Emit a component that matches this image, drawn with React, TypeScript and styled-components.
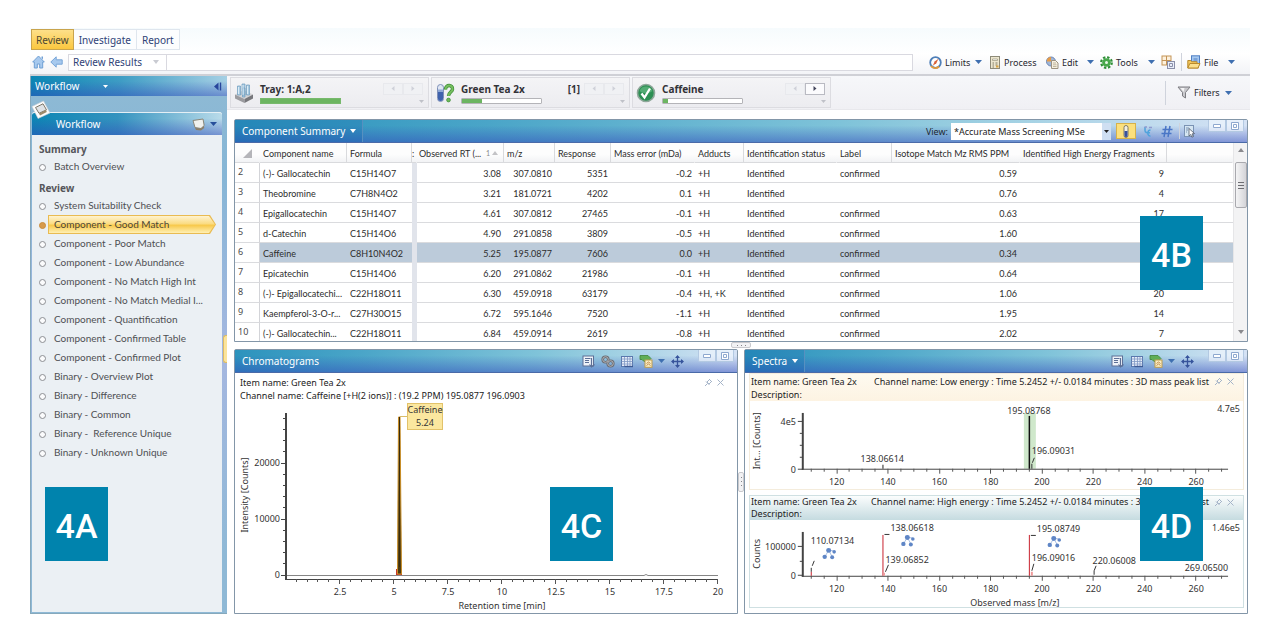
import React from 'react';
import styled, { createGlobalStyle, css } from 'styled-components';

const ui = '"Noto Sans", "Open Sans", sans-serif';
const compact = 'Lato, "Noto Sans", sans-serif';

const GlobalStyle = createGlobalStyle`
  *, *::before, *::after { box-sizing: border-box; }
  body { margin: 0; background: #fff; font-family: ${ui}; color: #2b2b2b; }
  button, select, input { font: inherit; color: inherit; margin: 0; }
  button { border: 0; padding: 0; background: none; cursor: pointer; }
  svg { display: block; flex: none; }
`;

/* ---------- shell ---------- */

const Page = styled.div`
  padding: 28px 30px 24px 30px;
`;

const TopBar = styled.header`
  background: linear-gradient(#f6fbfd 0, #fff 26px, #f1f2f6 48px);
  border-bottom: 2px solid #cfd0d6;
  height: 48px;
`;

const Tabs = styled.nav`
  display: flex;
  height: 23px;
  padding: 1px 0 1px 1px;
`;

const Tab = styled.button<{ $active?: boolean }>`
  font-size: 10px;
  line-height: 18px;
  padding: 0 5px;
  color: #2f4277;
  border: 1px solid #dfe6ee;
  border-left-width: 0;
  background: #fcfdfe;
  ${(p) =>
    p.$active &&
    css`
      padding: 0 4px;
      color: #4d4732;
      border: 1px solid #c9a44d;
      background: linear-gradient(#fde08a, #fbc73f);
    `}
`;

const NavRow = styled.div`
  display: flex;
  align-items: center;
  height: 22px;
`;

const NavIcons = styled.div`
  display: flex;
  gap: 5px;
  padding: 0 5px 0 2px;
`;

const Crumb = styled.button`
  display: flex;
  align-items: center;
  justify-content: space-between;
  width: 99px;
  height: 17px;
  padding: 0 7px 0 4px;
  font-size: 10px;
  color: #2f4277;
  background: #fff;
  border: 1px solid #d9d9e0;
`;

const Address = styled.input`
  flex: 1;
  min-width: 0;
  height: 17px;
  border: 1px solid #d9d9e0;
  border-left: 0;
  background: #fff;
  margin-right: 16px;
`;

const Tools = styled.div`
  display: flex;
  align-items: center;
  height: 22px;
  padding-right: 9px;
`;

const Tool = styled.button<{ $width: number }>`
  display: flex;
  align-items: center;
  gap: 3px;
  width: ${(p) => p.$width}px;
  padding-right: 6px;
  font-size: 9px;
  color: #26262e;
  & > :nth-child(3) { margin-left: auto; }
`;

const Divider = styled.span<{ $height: number; $after?: number }>`
  width: 1px;
  height: ${(p) => p.$height}px;
  margin-right: ${(p) => p.$after ?? 0}px;
  background: #cfd3dc;
`;

const Body = styled.div`
  display: grid;
  grid-template-columns: 197px minmax(0, 1fr);
`;

/* ---------- sidebar ---------- */

const Sidebar = styled.aside`
  position: relative;
  display: flex;
  flex-direction: column;
  background: linear-gradient(#8fbad4 0, #86b6d6 100px, #a5b7e0 280px, #8fb9d6 480px);
  border: 1px solid #86a9bc;
  border-top: 0;
  border-right: 0;
  padding-bottom: 1px;
`;

const blueVertical = 'linear-gradient(rgba(40, 90, 190, 0) 25%, rgba(50, 75, 185, 0.5))';

const SideTitle = styled.h2`
  display: flex;
  align-items: center;
  height: 20px;
  margin: 0;
  padding: 0 5px 0 4px;
  font-size: 10px;
  font-weight: 400;
  color: #fff;
  background: ${blueVertical}, linear-gradient(to right, #0d86b4, #3d9cc4 45%, #a5cfe4);
`;

const TitleButton = styled.button`
  display: flex;
  align-items: center;
  gap: 24px;
  flex: 1;
  color: #fff;
`;

const SidePanel = styled.section`
  position: relative;
  flex: 1;
  display: flex;
  flex-direction: column;
  margin: 16px 5px 0 1px;
  background: #ebf0f4;
  border-radius: 3px 3px 0 0;
`;

const SidePanelTitle = styled.h3`
  display: flex;
  align-items: center;
  height: 23px;
  margin: 0;
  padding: 0 5px 0 24px;
  font-size: 10px;
  font-weight: 400;
  color: #fff;
  border-top: 1px solid #e4eff5;
  border-radius: 3px 3px 0 0;
  background: ${blueVertical}, linear-gradient(to right, #0d86b4, #3493bf 45%, #b9dbea);
`;

const PanelMenu = styled.button`
  display: flex;
  align-items: center;
  gap: 5px;
  margin-left: auto;
`;

const Photo = styled.span`
  position: absolute;
  left: -1px;
  top: -12px;
`;

const StepList = styled.nav`
  display: flex;
  flex-direction: column;
  padding: 6px 6px 0 7px;
`;

const StepHeading = styled.h4`
  margin: 0;
  font-size: 10px;
  line-height: 16px;
  color: #55565a;
  &:not(:first-child) { margin-top: 4px; }
`;

const Step = styled.a<{ $active?: boolean }>`
  display: flex;
  align-items: center;
  height: 19px;
  gap: 2px;
  font-family: ${compact};
  font-size: 10px;
  color: #4e4f53;
  text-decoration: none;
  white-space: nowrap;
  &::before {
    content: '';
    width: 7px;
    height: 7px;
    margin-top: 2px;
    border-radius: 50%;
    border: 1px solid ${(p) => (p.$active ? '#c98c3c' : '#8d8f93')};
    background: ${(p) => (p.$active ? '#d79a4c' : '#fbfcfd')};
  }
`;

const arrowShape = 'polygon(0 0, calc(100% - 6px) 0, 100% 50%, calc(100% - 6px) 100%, 0 100%)';

const StepLabel = styled.span<{ $active?: boolean }>`
  flex: 1;
  line-height: 17px;
  padding: 1px 0 1px 6px;
  white-space: pre;
  ${(p) =>
    p.$active &&
    css`
      color: #4c4637;
      background: #e9bb52;
      clip-path: ${arrowShape};
      padding: 1px;
    `}
`;

const StepFill = styled.span`
  display: block;
  padding-left: 5px;
  background: linear-gradient(#fff3cf, #fbdc83 45%, #f8c94c 55%, #fff0b4);
  clip-path: ${arrowShape};
`;

const CollapseTab = styled.button`
  position: absolute;
  right: 0;
  top: 259px;
  width: 4px;
  height: 28px;
  border: 1px solid #e0bd62;
  border-right: 0;
  border-radius: 3px 0 0 3px;
  background: #fbe49c;
`;

/* ---------- badges over panels ---------- */

const Badge = styled.span<{ $left?: number; $right?: number; $top: number }>`
  position: absolute;
  z-index: 2;
  top: ${(p) => p.$top}px;
  ${(p) => (p.$left !== undefined ? `left: ${p.$left}px;` : `right: ${p.$right}px;`)}
  width: 63px;
  height: 74px;
  background: #0083ad;
  color: #fff;
  font: 500 34px/78px Roboto, sans-serif;
  text-align: center;
`;

/* ---------- item strip ---------- */

const Main = styled.main`
  display: flex;
  flex-direction: column;
  min-width: 0;
`;

const Strip = styled.div`
  display: flex;
  height: 34px;
  background: linear-gradient(#f6f7fa, #f0f0f4);
  border-bottom: 1px solid #e8e8ec;
  padding: 1px 12px 1px 3px;
`;

const StripCard = styled.section`
  display: grid;
  grid-template-columns: 26px minmax(0, 1fr);
  align-items: center;
  width: 199px;
  margin-right: 2px;
  padding-left: 3px;
  border: 1px solid #dcdce1;
  background: linear-gradient(#f4f4f6, #ececf0);
`;

const StripInfo = styled.div`
  display: flex;
  flex-direction: column;
  gap: 2px;
  padding-right: 4px;
`;

const StripHead = styled.div`
  display: flex;
  align-items: center;
  height: 15px;
  font-size: 10px;
  font-weight: 700;
  color: #333338;
`;

const StripCount = styled.span`
  margin-left: auto;
  padding-right: 4px;
`;

const Pager = styled.div`
  display: flex;
  margin-left: auto;
  padding-right: 1px;
  ${StripCount} + & { margin-left: 0; }
`;

const PagerButton = styled.button<{ $on?: boolean }>`
  width: 20px;
  height: 12px;
  display: grid;
  place-items: center;
  border: 1px solid ${(p) => (p.$on ? '#b9bac2' : '#e8e9ed')};
  background: ${(p) => (p.$on ? '#fbfbfd' : '#f0f1f4')};
  color: ${(p) => (p.$on ? '#44465c' : '#cfd1d9')};
`;

const StripFoot = styled.div`
  display: flex;
  align-items: center;
  justify-content: space-between;
`;

const Meter = styled.div`
  width: 81px;
  height: 6px;
  border: 1px solid #b4b4b8;
  border-radius: 1px;
  background: #fff;
`;

const MeterFill = styled.div<{ $share: number }>`
  width: ${(p) => p.$share}%;
  height: 4px;
  background: #6cb561;
  ${(p) => p.$share === 100 && 'outline: 1px solid #77b96c;'}
`;

const Filters = styled.div`
  display: flex;
  align-items: center;
  gap: 11px;
  margin-left: auto;
`;

/* ---------- panels ---------- */

const Workspace = styled.div`
  padding: 9px 2px 0 7px;
`;

const Panel = styled.section`
  position: relative;
  min-width: 0;
  border: 1px solid #8396a8;
  border-radius: 2px 2px 0 0;
  background: #fff;
`;

const PanelHeader = styled.header`
  display: flex;
  align-items: center;
  height: 23px;
  color: #fff;
  border-bottom: 1px solid #4a6aa8;
  background: ${blueVertical},
    linear-gradient(to right, #2c93bd, #4aa5c8 25%, #7fc3d9 60%, #a5d2e4 78%, #d5e2f5);
`;

const PanelTitle = styled.h2<{ $menu?: boolean }>`
  display: flex;
  align-items: center;
  gap: 5px;
  height: 22px;
  margin: 0 auto 0 0;
  padding: 0 6px 0 7px;
  font-size: 10px;
  font-weight: 400;
  ${(p) =>
    p.$menu &&
    css`
      border-right: 1px solid #5790c0;
      background: rgba(10, 90, 165, 0.2);
    `}
`;

const HeaderTools = styled.div<{ $end: number }>`
  display: flex;
  align-items: center;
  gap: 5px;
  height: 22px;
  padding-right: ${(p) => p.$end}px;
`;

const IconButton = styled.button<{ $on?: boolean }>`
  display: grid;
  place-items: center;
  min-width: 14px;
  height: 16px;
  ${(p) =>
    p.$on &&
    css`
      width: 20px;
      border: 1px solid #d6b24b;
      background: #fbe07c;
    `}
`;

const WindowButtons = styled.div`
  display: flex;
  align-self: flex-start;
  padding-right: 3px;
`;

const WindowButton = styled.button`
  width: 18px;
  height: 12px;
  display: grid;
  place-items: center;
  color: #8ea8cf;
  background: rgba(245, 250, 255, 0.6);
  border: 1px solid #b3c9e2;
  border-top: 0;
  border-radius: 0 0 2px 2px;
`;

const ViewPicker = styled.label`
  display: flex;
  align-items: center;
  gap: 3px;
  font-size: 9px;
  color: #1f2733;
`;

const SelectBox = styled.span`
  position: relative;
  display: flex;
  & > svg { position: absolute; right: 2px; top: 7px; pointer-events: none; }
`;

const Select = styled.select`
  appearance: none;
  width: 160px;
  height: 17px;
  padding: 0 10px 0 3px;
  border: 0;
  border-right: 9px solid #cfdff2;
  border-radius: 0;
  background: #fff;
  color: #222;
`;

/* ---------- table ---------- */

const TableArea = styled.div`
  display: grid;
  grid-template-columns: minmax(0, 1fr) 14px;
  height: 198px;
  overflow: hidden;
`;

const Table = styled.table`
  width: 100%;
  table-layout: fixed;
  border-collapse: separate;
  border-spacing: 0;
  font-family: ${compact};
  font-size: 9px;
  line-height: 11px;
`;

const Th = styled.th<{ $line?: boolean; $inset?: number }>`
  height: 20px;
  padding: 1px 0 0 ${(p) => p.$inset ?? 3}px;
  text-align: left;
  font-weight: 400;
  color: #2c2c2c;
  white-space: nowrap;
  background: linear-gradient(#fdfdfd 60%, #f2f3f5);
  border-bottom: 1px solid #d9dadd;
  border-right: 1px solid ${(p) => (p.$line ? '#d9dadd' : 'transparent')};
`;

const Sorted = styled.span`
  display: flex;
  align-items: center;
  justify-content: space-between;
  padding-right: 5px;
`;

const SortMark = styled.span`
  display: flex;
  align-items: center;
  gap: 2px;
  font-size: 7px;
  color: #8a8a8a;
`;

const Tr = styled.tr<{ $selected?: boolean }>`
  background: ${(p) => (p.$selected ? '#bccbda' : '#fff')};
`;

const Td = styled.td<{ $right?: boolean; $inset?: number; $gutter?: boolean }>`
  height: 20px;
  padding: 2px ${(p) => (p.$right ? 3 : 0)}px 0 ${(p) => p.$inset ?? 3}px;
  text-align: ${(p) => (p.$right ? 'right' : 'left')};
  white-space: nowrap;
  color: #2c2c2c;
  border-bottom: 1px solid #dadbde;
  ${(p) => p.$gutter && 'background: #e1e4eb; border-bottom-color: #e1e4eb;'}
`;

const RowHead = styled.th`
  height: 20px;
  padding: 0 0 2px 3px;
  text-align: left;
  font: 400 9px/12px ${ui};
  color: #4a4a4a;
  background: #fff;
  border-right: 1px solid #d3d4d8;
  border-bottom: 1px solid #dadbde;
`;

const ScrollTrack = styled.div`
  display: flex;
  flex-direction: column;
  align-items: center;
  background: #f3f3f4;
  border-left: 1px solid #e6e6e8;
  padding: 5px 0 9px;
  color: #8a8a8e;
`;

const ScrollThumb = styled.div`
  display: grid;
  place-items: center;
  width: 12px;
  height: 46px;
  margin: 10px 0 auto;
  border: 1px solid #a9a9ae;
  border-radius: 2px;
  background: linear-gradient(to right, #f4f4f5, #d4d4d8);
`;

/* ---------- splitters ---------- */

const RowSplitter = styled.div`
  display: flex;
  justify-content: center;
  height: 7px;
`;

const Split = styled.div`
  display: grid;
  grid-template-columns: minmax(0, 1fr) 6px minmax(0, 1fr);
`;

const ColumnSplitter = styled.div`
  align-self: center;
`;

const Grip = styled.div<{ $vertical?: boolean }>`
  display: grid;
  place-items: center;
  width: ${(p) => (p.$vertical ? 6 : 20)}px;
  height: ${(p) => (p.$vertical ? 20 : 6)}px;
  border: 1px solid #c9c9cd;
  border-radius: 2px;
  background: #f2f2f4;
`;

/* ---------- charts ---------- */

const ChartInfo = styled.div<{ $tone?: 'cream' | 'blue' | 'plain' }>`
  display: flex;
  align-items: flex-start;
  font-size: 9px;
  line-height: 13px;
  white-space: nowrap;
  color: #222;
  padding: 3px 12px 0 5px;
  ${(p) =>
    p.$tone === 'cream' &&
    css`
      padding: 1px 8px 0 1px;
      background: linear-gradient(#fefaf0, #fdf3e2);
    `}
  ${(p) =>
    p.$tone === 'blue' &&
    css`
      padding: 0 8px 0 1px;
      line-height: 12px;
      background: linear-gradient(#fbfdfd, #c5dbe0);
    `}
`;

const InfoLines = styled.div`
  flex: 1;
  min-width: 0;
`;

const InfoLine = styled.div`
  display: flex;
  justify-content: space-between;
  padding-right: 5px;
`;

const InfoActions = styled.div`
  display: flex;
  gap: 3px;
  height: 13px;
  align-items: center;
  color: #a5b4c8;
`;

const Chart = styled.svg`
  width: 100%;
  height: auto;
  font-family: ${ui};
  font-size: 9px;
  fill: #333;
`;

const SpectraBody = styled.div`
  display: flex;
  flex-direction: column;
  gap: 5px;
  padding: 0 3px 4px 4px;
`;

const Spectrum = styled.article<{ $blue?: boolean }>`
  border: 1px solid ${(p) => (p.$blue ? '#cfe0e2' : '#f4ecdc')};
`;

/* ---------- drawings ---------- */

const Caret = ({ color = '#3f6fb0', w = 7, h = 4 }: { color?: string; w?: number; h?: number }) => (
  <svg width={w} height={h} viewBox="0 0 8 4" preserveAspectRatio="none"><path d="M0 0h8L4 4z" fill={color} /></svg>
);
const Side = ({ left }: { left?: boolean }) => (
  <svg width="4" height="5" viewBox="0 0 4 5"><path d={left ? 'M3.5 0v5L.5 2.5z' : 'M.5 0v5l3-2.500z'} fill="currentColor" /></svg>
);
const HomeIcon = () => (
  <svg width="13" height="14" viewBox="0 0 13 14">
    <path d="M6.500 1 .7 7h1.600v6h3V9h2.400v4h3V7h1.600z" fill="#a7c9ee" stroke="#6f9fd4" />
    <path d="M9.500 1.500h1.500v3l-1.500-1.500z" fill="#6f9fd4" />
  </svg>
);
const BackIcon = () => (
  <svg width="13" height="12" viewBox="0 0 13 12">
    <path d="M6.200.8v3h6v4.400h-6v3L.8 6z" fill="#a7c9ee" stroke="#78a6d8" />
  </svg>
);
const GaugeIcon = () => (
  <svg width="13" height="13" viewBox="0 0 13 13">
    <circle cx="6.500" cy="6.500" r="5.300" fill="#fff" stroke="#4f7fb8" strokeWidth="1.800" />
    <path d="M2 10A5.300 5.300 0 0 0 10 10.500" fill="none" stroke="#e39a3c" strokeWidth="1.800" />
    <path d="M9.500 2.800 7.300 7.200 3.800 9.800 5.600 5.600z" fill="#d9623a" />
  </svg>
);
const ProcessIcon = () => (
  <svg width="13" height="13" viewBox="0 0 13 13">
    <rect x="2.500" y=".5" width="9" height="12" fill="#ece6cf" stroke="#8d8a78" />
    <path d="M4.500 3h5v1.500h-5z" fill="#fff" stroke="#9a9478" strokeWidth=".7" />
    <path d="M4.500 7h1.500M7.500 7H9.500M4.500 9h1.500M7.500 9H9.500M4.500 11h1.500" stroke="#7f7a62" />
    <path d="M8 9.500h2.500v2H8z" fill="#d9a544" />
  </svg>
);
const EditIcon = () => (
  <svg width="13" height="13" viewBox="0 0 13 13">
    <circle cx="5" cy="5.500" r="4.500" fill="#9fb6d8" stroke="#6d86b2" />
    <path d="M5 1v4.500H.8A4.300 4.300 0 0 1 5 1z" fill="#e79b46" />
    <path d="M5.500 4.500h4l2.500 2.500v5.500H5.500z" fill="#f6efe0" stroke="#9c9280" />
    <path d="M7 7h3M7 8.800h3.500M7 10.500h3.500" stroke="#b4a98f" strokeWidth=".8" />
  </svg>
);
const GearIcon = () => (
  <svg width="13" height="13" viewBox="0 0 13 13">
    <circle cx="6.500" cy="6.500" r="5.300" fill="none" stroke="#2f8f37" strokeWidth="2.200" strokeDasharray="2.400 1.760" />
    <circle cx="6.500" cy="6.500" r="4.300" fill="#47a84b" />
    <circle cx="6.500" cy="6.500" r="1.500" fill="#e9f6e8" />
  </svg>
);
const LayoutIcon = () => (
  <svg width="14" height="14" viewBox="0 0 14 14">
    <rect x="1" y="1" width="9" height="9" fill="#fdf1dd" stroke="#c39355" />
    <path d="M1 5.500h9M5.500 1v9" stroke="#c39355" />
    <rect x="6.500" y="6.500" width="7" height="7" fill="#e9eefa" stroke="#8b8fa8" />
    <path d="M8.500 8.500h3v3h-3z" fill="none" stroke="#8b8fa8" />
  </svg>
);
const FolderIcon = () => (
  <svg width="14" height="14" viewBox="0 0 14 14">
    <rect x="4.500" y=".8" width="8" height="9" fill="#a5c8f0" stroke="#4f7fc4" />
    <path d="M6.500 4h4M6.500 6h4" stroke="#4f7fc4" />
    <path d="M.8 5.500h3l1 1.200h5L11.500 13H.8z" fill="#f3c75c" stroke="#b98a2c" />
    <path d="m.8 13 2-4.500H13L11 13z" fill="#fbdf8c" stroke="#b98a2c" />
  </svg>
);
const FunnelIcon = () => (
  <svg width="14" height="13" viewBox="0 0 14 13">
    <path d="M1 1h12L8.500 6.500V12L5.500 10V6.500z" fill="#c9c9cd" stroke="#7d7d82" />
    <path d="M3.500 2h4L6.500 6z" fill="#f5f5f6" />
  </svg>
);
const TrayIcon = () => (
  <svg width="20" height="20" viewBox="0 0 20 20">
    <path d="M1 11.500 10 7l9 4.500-8.500 4.500z" fill="#d4d4d6" />
    <path d="m1 11.500 9.500 4.500v4L1 15.500z" fill="#9b9b9f" /><path d="M19 11.500 10.500 16v4L19 15.500z" fill="#77777b" />
    <path d="M3.500 3h3v9h-3zM8 1h3v11H8zM12.500 2h3v10h-3zM8.500 5h2.500v9H8.500z" fill="#a9cbe2" stroke="#6e9cbd" strokeWidth=".7" />
    <path d="M4.500 4v7M9 2v10M13.500 3v8" stroke="#e8f4fb" strokeWidth=".8" />
  </svg>
);
const VialIcon = () => (
  <svg width="20" height="20" viewBox="0 0 20 20">
    <rect x="2.500" y="1.500" width="6" height="17" rx="3" fill="#dfe6f3" stroke="#7f90b8" />
    <path d="M3 9h5v6.500a2.500 2.500 0 0 1-5 0z" fill="#3f62ad" /><path d="M3 6.500h5V9H3z" fill="#8ea8d6" />
    <path d="M10.500 6.500C10.500 1 18 1.500 17.500 6.300c-.3 2.700-4 3-4 6.700" fill="none" stroke="#3c8d36" strokeWidth="3.400" />
    <path d="M10.500 6.500C10.500 1 18 1.500 17.500 6.300c-.3 2.700-4 3-4 6.700" fill="none" stroke="#76be5f" strokeWidth="2" />
    <circle cx="13.500" cy="17" r="1.900" fill="#6fba59" stroke="#3c8d36" strokeWidth=".7" />
  </svg>
);
const CheckIcon = () => (
  <svg width="20" height="20" viewBox="0 0 20 20">
    <circle cx="10" cy="10" r="8.500" fill="#2d8f53" stroke="#8fa79a" strokeWidth="1.600" />
    <path d="M3.500 8a7 7 0 0 1 13 0c-4 3-9 3-13 0z" fill="#6cc08a" opacity=".6" />
    <path d="m5.500 10.500 3 4 5.500-9" fill="none" stroke="#fff" strokeWidth="2.300" />
  </svg>
);
const ScreenIcon = () => (
  <svg width="13" height="13" viewBox="0 0 13 13">
    <path d="M1 2.500 11 1l1.200 6.500L9 10.500 3 9.500z" fill="#f1f1ee" stroke="#8a8678" />
    <path d="m3 10 6 .5 3-2.500.2 2-3.200 2.500-5-.5z" fill="#8d7f68" />
  </svg>
);
const PhotoIcon = () => (
  <svg width="20" height="20" viewBox="0 0 20 20">
    <path d="M1 6.500 12.500 1l6.500 12L7 18.500z" fill="#fdfdfd" stroke="#c9cfd4" strokeWidth=".6" />
    <path d="m4.500 7.500 7.500-3.700 3.500 6-7.500 3.500z" fill="#dfe3e6" stroke="#7e7768" />
    <path d="m8 13.500 7-3.500.8 2L9 15.500z" fill="#9c8a6a" />
  </svg>
);
const PinSideIcon = () => (
  <svg width="9" height="9" viewBox="0 0 9 9"><path d="M5.500.5v8L1 4.500z" fill="#28469c" /><path d="M7.500.5v8" stroke="#28469c" strokeWidth="1.400" /></svg>
);
const VialSmallIcon = () => (
  <svg width="6" height="13" viewBox="0 0 6 13"><rect x="1" y=".5" width="4" height="12" rx="2" fill="#f3f0e0" stroke="#7d7a6a" /><path d="M1.500 6h3v4.500a1.500 1.500 0 0 1-3 0z" fill="#37519c" /></svg>
);
const FlowIcon = () => (
  <svg width="13" height="13" viewBox="0 0 13 13" fill="none" stroke="#4fa3dc" strokeWidth="1.500"><path d="M3 2v3.500c0 2 2 2.500 5 2.200M8.500 5C5 5 5 11.500 8.500 11" /><path d="M2.500 2h2.500M7 2.500h3" stroke="#8f9bd0" /></svg>
);
const HashIcon = () => (
  <svg width="12" height="13" viewBox="0 0 12 13" stroke="#4a76c6" strokeWidth="1.500"><path d="M5 1 3 12M9 1 7 12M1.500 4.500H11.500M.5 8.500H10.500" /></svg>
);
const PointerIcon = () => (
  <svg width="13" height="13" viewBox="0 0 13 13"><rect x="1.500" y=".5" width="9" height="11" fill="#d5e6f2" stroke="#7a93b4" /><path d="M3 3h3M3 5h2M3 7h1" stroke="#7a93b4" /><path d="m6 3.500 5.500 5-2.500.4 1.200 2.600-1.300.7L7.700 9.500 6 11z" fill="#fff" stroke="#4c5568" strokeWidth=".8" /></svg>
);
const NotesIcon = () => (
  <svg width="14" height="13" viewBox="0 0 14 13"><rect x="1" y="1" width="10.500" height="10" fill="#eef2f8" stroke="#5d6f96" /><path d="M3 3.500h5.500M3 5.500h4M3 7.500h4" stroke="#5d6f96" /><path d="M9.500 3v8M7.500 9.500l2 2.500 3-2.500" fill="none" stroke="#5d6f96" strokeWidth="1.200" /></svg>
);
const LinkIcon = () => (
  <svg width="14" height="13" viewBox="0 0 14 13" fill="none"><circle cx="4.500" cy="4.500" r="2.800" stroke="#67696f" strokeWidth="2.600" /><circle cx="9.500" cy="8.500" r="2.800" stroke="#67696f" strokeWidth="2.600" /><circle cx="4.500" cy="4.500" r="2.800" stroke="#b4b6ba" /><circle cx="9.500" cy="8.500" r="2.800" stroke="#b4b6ba" /></svg>
);
const GridIcon = () => (
  <svg width="14" height="13" viewBox="0 0 14 13"><rect x="1.500" y="1.500" width="11" height="10" fill="#e6edf8" stroke="#5b78ad" /><path d="M1.500 4h11M1.500 6.500h11M1.500 9h11M4.500 2v9M7.500 2v9M10 2v9" stroke="#7f98c4" strokeWidth=".8" /><path d="M4.500 11.500h8.500" stroke="#3d5a94" strokeWidth="1.400" /></svg>
);
const ExportIcon = () => (
  <svg width="14" height="14" viewBox="0 0 14 14"><path d="M1 1.500h8l3 3-3 3H5l-2-2H1z" fill="#5fae54" stroke="#3d8438" strokeWidth=".8" /><rect x="6" y="6" width="7" height="7.300" fill="#fbeec2" stroke="#bf9c4e" /><path d="m7.500 9.500 2-1.500 2 1.500m-4 2 2-1.500 2 1.500" fill="none" stroke="#bf8a4e" /></svg>
);
const MoveIcon = () => (
  <svg width="13" height="13" viewBox="0 0 13 13"><path d="M6.500 1v11M1 6.500h11" stroke="#37549c" strokeWidth="1.300" /><path d="M6.500 0 9 3H4zM6.500 13 4 10h5zM0 6.500 3 4v5zM13 6.500 10 9V4z" fill="#37549c" /></svg>
);
const MinimizeIcon = () => (
  <svg width="8" height="4" viewBox="0 0 8 4"><path d="M.5.500h7v3h-7z" fill="#fff" stroke="currentColor" /></svg>
);
const MaximizeIcon = () => (
  <svg width="8" height="8" viewBox="0 0 8 8"><path d="M.5.500h7v7h-7zM2.500 2.500h3v3h-3z" fill="#fff" stroke="currentColor" /></svg>
);
const PinIcon = () => (
  <svg width="9" height="9" viewBox="0 0 9 9" fill="none" stroke="currentColor"><path d="M5 1l3 3M5.500 1.500 3 4l2 2 2.500-2.500M2 3.500 5.500 7M3.500 5.500 1 8" /></svg>
);
const CloseIcon = () => (
  <svg width="9" height="9" viewBox="0 0 9 9" stroke="currentColor"><path d="m1.500 1.500 6 6m0-6-6 6" /></svg>
);
const Dots = ({ vertical }: { vertical?: boolean }) => (
  <svg width={vertical ? 1 : 9} height={vertical ? 9 : 1} viewBox={vertical ? '0 0 1 9' : '0 0 9 1'}>
    <path d={vertical ? 'M.5 0v9' : 'M0 .5h9'} stroke="#85858a" strokeDasharray="1 3" />
  </svg>
);
const Molecule = ({ x, y }: { x: number; y: number }) => (
  <g transform={`translate(${x} ${y})`} fill="#5f86c6">
    <path d="M2 9 6 2.500 9.500 9M6 2.500 11 3" fill="none" stroke="#a9bfe2" />
    <circle cx="2" cy="9" r="2.200" /><circle cx="6" cy="2.500" r="2.500" /><circle cx="9.500" cy="9.500" r="2" /><circle cx="11.500" cy="4" r="1.800" />
  </g>
);

/* ---------- data ---------- */

const reviewSteps = [
  'System Suitability Check', 'Component - Good Match', 'Component - Poor Match', 'Component - Low Abundance',
  'Component - No Match High Int', 'Component - No Match Medial I...', 'Component - Quantification',
  'Component - Confirmed Table', 'Component - Confirmed Plot', 'Binary - Overview Plot', 'Binary - Difference',
  'Binary - Common', 'Binary -  Reference Unique', 'Binary - Unknown Unique',
];

const rows = [
  ['2', '(-)- Gallocatechin', 'C15H14O7', '3.08', '307.0810', '5351', '-0.2', '+H', 'confirmed', '0.59', '9'],
  ['3', 'Theobromine', 'C7H8N4O2', '3.21', '181.0721', '4202', '0.1', '+H', '', '0.76', '4'],
  ['4', 'Epigallocatechin', 'C15H14O7', '4.61', '307.0812', '27465', '-0.1', '+H', 'confirmed', '0.63', '17'],
  ['5', 'd-Catechin', 'C15H14O6', '4.90', '291.0858', '3809', '-0.5', '+H', 'confirmed', '1.60', ''],
  ['6', 'Caffeine', 'C8H10N4O2', '5.25', '195.0877', '7606', '0.0', '+H', 'confirmed', '0.34', ''],
  ['7', 'Epicatechin', 'C15H14O6', '6.20', '291.0862', '21986', '-0.1', '+H', 'confirmed', '0.64', ''],
  ['8', '(-)- Epigallocatechi...', 'C22H18O11', '6.30', '459.0918', '63179', '-0.4', '+H, +K', 'confirmed', '1.06', '20'],
  ['9', 'Kaempferol-3-O-r...', 'C27H30O15', '6.72', '595.1646', '7520', '-1.1', '+H', 'confirmed', '1.95', '14'],
  ['10', '(-)- Gallocatechin...', 'C22H18O11', '6.84', '459.0914', '2619', '-0.8', '+H', 'confirmed', '2.02', '7'],
];

const columnWidths = [25, 87, 65, 5, 87, 51, 56, 84, 49, 93, 55, 128, 147];

/* ---------- parts ---------- */

function StripItem({ icon, name, count, share, next }: { icon: React.ReactNode; name: string; count?: string; share: number; next?: boolean }) {
  return (
    <StripCard>
      {icon}
      <StripInfo>
        <StripHead>
          {name}
          {count && <StripCount>{count}</StripCount>}
          <Pager>
            <PagerButton aria-label={`Previous, ${name}`}><Side left /></PagerButton>
            <PagerButton $on={next} aria-label={`Next, ${name}`}><Side /></PagerButton>
          </Pager>
        </StripHead>
        <StripFoot>
          <Meter role="progressbar" aria-valuenow={share}><MeterFill $share={share} /></Meter>
          <Caret color="#bfc1c8" w={5} h={3} />
        </StripFoot>
      </StripInfo>
    </StripCard>
  );
}

function PanelWindowButtons() {
  return (
    <WindowButtons>
      <WindowButton aria-label="Minimize"><MinimizeIcon /></WindowButton>
      <WindowButton aria-label="Maximize"><MaximizeIcon /></WindowButton>
    </WindowButtons>
  );
}

function ChartTools({ link }: { link?: boolean }) {
  return (
    <HeaderTools $end={14}>
      <IconButton aria-label="Annotate"><NotesIcon /></IconButton>
      {link && <IconButton aria-label="Link"><LinkIcon /></IconButton>}
      <IconButton aria-label="Show as table"><GridIcon /></IconButton>
      <IconButton aria-label="Export"><ExportIcon /></IconButton>
      <Caret />
      <IconButton aria-label="Pan"><MoveIcon /></IconButton>
    </HeaderTools>
  );
}

function ComponentTable() {
  return (
    <TableArea>
      <Table>
        <colgroup>
          {columnWidths.map((w, i) => <col key={i} width={w} />)}
          <col />
        </colgroup>
        <thead>
          <tr>
            <Th $inset={8}><svg width="9" height="9" viewBox="0 0 9 9"><path d="M9 0v9H0z" fill="#b5b5b9" /></svg></Th>
            <Th $line>Component name</Th>
            <Th $line>Formula</Th>
            <Th $inset={0}>:</Th>
            <Th $line $inset={2}><Sorted>Observed RT (...<SortMark>1<svg width="6" height="4" viewBox="0 0 6 4"><path d="M0 4h6L3 0z" fill="#c3c3c6" /></svg></SortMark></Sorted></Th>
            <Th $line>m/z</Th>
            <Th $line>Response</Th>
            <Th>Mass error (mDa)</Th>
            <Th $line>Adducts</Th>
            <Th>Identification status</Th>
            <Th $line>Label</Th>
            <Th>Isotope Match Mz RMS PPM</Th>
            <Th $line>Identified High Energy Fragments</Th>
            <Th />
          </tr>
        </thead>
        <tbody>
          {rows.map(([n, name, formula, rt, mz, response, error, adducts, label, iso, frag]) => (
            <Tr key={n} $selected={n === '6'}>
              <RowHead scope="row">{n}</RowHead>
              <Td>{name}</Td>
              <Td>{formula}</Td>
              <Td $gutter />
              <Td $right>{rt}</Td>
              <Td $right $inset={0}>{mz}</Td>
              <Td $right>{response}</Td>
              <Td $right>{error}</Td>
              <Td>{adducts}</Td>
              <Td>Identified</Td>
              <Td>{label}</Td>
              <Td $right>{iso}</Td>
              <Td $right>{frag}</Td>
              <Td />
            </Tr>
          ))}
        </tbody>
      </Table>
      <ScrollTrack>
        <svg width="6" height="4" viewBox="0 0 6 4"><path d="M0 4h6L3 0z" fill="currentColor" /></svg>
        <ScrollThumb>
          <svg width="6" height="7" viewBox="0 0 6 7"><path d="M0 .5h6M0 3.500h6M0 6.500h6" stroke="#6d6d72" /></svg>
        </ScrollThumb>
        <Caret color="#8a8a8e" w={6} h={4} />
      </ScrollTrack>
    </TableArea>
  );
}

const crisp = (n: number) => Math.floor(n) + 0.5;

function Chromatogram() {
  const xAt = (min: number) => 51 + min * 21.6;
  const yAt = (k: number) => 173 - k * 5.6;
  return (
    <Chart viewBox="0 0 502 211" role="img" aria-label="Caffeine chromatogram">
      <path d="M51 173.500H409q2-2 4 0H483" stroke="#858585" fill="none" />
      <path d="M51 11V178" stroke="#444" strokeWidth="2" />
      <path d="M50 177.500H483" stroke="#444" />
      {Array.from({ length: 15 }, (_, i) => (
        <path key={i} d={`M${i % 5 === 0 ? 46 : 48} ${crisp(yAt(i * 2))}H51`} stroke="#444" />
      ))}
      {Array.from({ length: 40 }, (_, i) => (
        <path key={i} d={`M${crisp(xAt((i + 1) / 2) - 0.5)} 177v${(i + 1) % 5 === 0 ? 5 : 3}`} stroke="#555" />
      ))}
      {[0, 10000, 20000].map((v) => (
        <text key={v} x="45" y={yAt(v / 1000) + 3} textAnchor="end">{v}</text>
      ))}
      {[2.5, 5, 7.5, 10, 12.5, 15, 17.5, 20].map((v) => (
        <text key={v} x={xAt(v)} y="193" textAnchor="middle">{v}</text>
      ))}
      <text x="267" y="207" textAnchor="middle">Retention time [min]</text>
      <text transform="translate(13 93) rotate(-90)" textAnchor="middle">Intensity [Counts]</text>
      <path d="M161 173v-6h6v6z" fill="#c8372a" />
      <path d="M162.500 172 163.500 15h1.500L166.500 172z" fill="#4a3a12" stroke="#c98d24" />
      <path d="M164.500 15v150" stroke="#3a2c0c" />
      <path d="M165 14.500h7" stroke="#d9bd6a" />
      <rect x="172.500" y="1.500" width="35" height="26" fill="#fbe79f" stroke="#e2c26a" />
      <text x="190" y="11" textAnchor="middle">Caffeine</text>
      <text x="190" y="24" textAnchor="middle">5.24</text>
    </Chart>
  );
}

const mzAt = (mz: number) => 87 + (mz - 120) * 2.578;

function MassAxis({ y, top }: { y: number; top: number }) {
  const ticks = Array.from({ length: 33 }, (_, i) => 110 + i * 5);
  return (
    <g>
      <path d={`M53 ${top}V${y + 1}`} stroke="#444" strokeWidth="2" />
      <path d={`M52 ${y + 0.5}H480`} stroke="#444" />
      {ticks.map((m) => (
        <path key={m} d={`M${crisp(mzAt(m))} ${y}v${m % 20 === 0 ? 5 : 3}`} stroke="#555" />
      ))}
      {[120, 140, 160, 180, 200, 220, 240, 260].map((m) => (
        <text key={m} x={mzAt(m)} y={y + 16} textAnchor="middle">{m}</text>
      ))}
    </g>
  );
}

function LowEnergy() {
  return (
    <Chart viewBox="0 0 495 88" role="img" aria-label="Low energy spectrum">
      <rect x="275" y="12" width="12" height="56" fill="#cfe8cb" />
      <MassAxis y={68} top={12} />
      <path d="M48 20.500h5M50 32.500h3M50 44.500h3M50 56.500h3M48 68.500h5" stroke="#444" />
      <text x="46" y="24" textAnchor="end">4e5</text>
      <text x="46" y="72" textAnchor="end">0</text>
      <text transform="translate(10 40) rotate(-90)" textAnchor="middle">Int... [Counts]</text>
      <path d="M133.500 64v4" stroke="#222" />
      <path d="M280.500 15v53" stroke="#111" strokeWidth="1.500" />
      <path d="m285.500 57-2 5M283 63v5" stroke="#333" />
      <text x="111" y="61">138.06614</text>
      <text x="280" y="13" textAnchor="middle">195.08768</text>
      <text x="283" y="53">196.09031</text>
      <text x="492" y="11" textAnchor="end">4.7e5</text>
    </Chart>
  );
}

function HighEnergy() {
  return (
    <Chart viewBox="0 0 495 88" role="img" aria-label="High energy spectrum">
      <MassAxis y={56} top={12} />
      <path d="M48 26.500h5M50 41.500h3M48 55.500h5" stroke="#444" />
      <text x="46" y="30" textAnchor="end">100000</text>
      <text x="46" y="59" textAnchor="end">0</text>
      <text transform="translate(10 34) rotate(-90)" textAnchor="middle">Counts</text>
      <path d="M61.500 52v4M133.500 15v41M280.500 15v41" stroke="#c8202c" />
      <path d="M282 52h2v4h-2zM134 53h1.500v3H134z" fill="#ee9a9a" />
      <path d="M61.500 52v-4M62.500 46l2-5M135 14.500h5M282 15.500h5M136 52l3-7M283 51l2-7M345.500 55v-4l2-5" stroke="#333" fill="none" />
      <text x="61" y="24">110.07134</text>
      <text x="141" y="11">138.06618</text>
      <text x="136" y="43">139.06852</text>
      <text x="288" y="12">195.08749</text>
      <text x="283" y="41">196.09016</text>
      <text x="344" y="44">220.06008</text>
      <text x="480" y="51" textAnchor="end">269.06500</text>
      <text x="492" y="11" textAnchor="end">1.46e5</text>
      <text x="266" y="86" textAnchor="middle">Observed mass [m/z]</text>
      <Molecule x={73} y={28} />
      <Molecule x={152} y={15} />
      <Molecule x={299} y={16} />
    </Chart>
  );
}

function Info({ tone, children }: { tone?: 'cream' | 'blue'; children: React.ReactNode }) {
  return (
    <ChartInfo $tone={tone}>
      <InfoLines>{children}</InfoLines>
      <InfoActions>
        <button aria-label="Pin chart"><PinIcon /></button>
        <button aria-label="Close chart"><CloseIcon /></button>
      </InfoActions>
    </ChartInfo>
  );
}

export default function App() {
  return (
    <Page>
      <GlobalStyle />
      <TopBar>
        <Tabs>
          <Tab $active>Review</Tab>
          <Tab>Investigate</Tab>
          <Tab>Report</Tab>
        </Tabs>
        <NavRow>
          <NavIcons>
            <button aria-label="Home"><HomeIcon /></button>
            <button aria-label="Back"><BackIcon /></button>
          </NavIcons>
          <Crumb>Review Results<Caret color="#c9cbd2" w={6} h={4} /></Crumb>
          <Address aria-label="Location" />
          <Tools>
            <Tool $width={59}><GaugeIcon /><span>Limits</span><Caret /></Tool>
            <Tool $width={58}><ProcessIcon /><span>Process</span></Tool>
            <Tool $width={54}><EditIcon /><span>Edit</span><Caret /></Tool>
            <Tool $width={61}><GearIcon /><span>Tools</span><Caret /></Tool>
            <Tool $width={20} aria-label="Layout"><LayoutIcon /></Tool>
            <Divider $height={18} $after={5} />
            <Tool $width={54}><FolderIcon /><span>File</span><Caret /></Tool>
          </Tools>
        </NavRow>
      </TopBar>

      <Body>
        <Sidebar>
          <SideTitle>
            <TitleButton>Workflow<Caret color="#fff" w={5} h={3} /></TitleButton>
            <button aria-label="Collapse sidebar"><PinSideIcon /></button>
          </SideTitle>
          <SidePanel>
            <Photo><PhotoIcon /></Photo>
            <SidePanelTitle>
              Workflow
              <PanelMenu aria-label="Workflow options"><ScreenIcon /><Caret color="#274f9b" /></PanelMenu>
            </SidePanelTitle>
            <StepList>
              <StepHeading>Summary</StepHeading>
              <Step href="#batch"><StepLabel>Batch Overview</StepLabel></Step>
              <StepHeading>Review</StepHeading>
              {reviewSteps.map((s, i) => (
                <Step key={s} href={`#step-${i}`} $active={i === 1}>
                  <StepLabel $active={i === 1}>{i === 1 ? <StepFill>{s}</StepFill> : s}</StepLabel>
                </Step>
              ))}
            </StepList>
          </SidePanel>
          <CollapseTab aria-label="Resize sidebar" />
          <Badge $left={14} $top={411}>4A</Badge>
        </Sidebar>

        <Main>
          <Strip>
            <StripItem icon={<TrayIcon />} name="Tray: 1:A,2" share={100} />
            <StripItem icon={<VialIcon />} name="Green Tea 2x" count="[1]" share={25} />
            <StripItem icon={<CheckIcon />} name="Caffeine" share={6} next />
            <Filters>
              <Divider $height={24} />
              <Tool $width={61}><FunnelIcon /><span>Filters</span><Caret /></Tool>
            </Filters>
          </Strip>

          <Workspace>
            <Panel>
              <PanelHeader>
                <PanelTitle $menu>Component Summary<Caret color="#fff" w={6} h={4} /></PanelTitle>
                <HeaderTools $end={12}>
                  <ViewPicker>
                    View:
                    <SelectBox>
                      <Select defaultValue="mse"><option value="mse">*Accurate Mass Screening MSe</option></Select>
                      <Caret color="#222" w={5} h={3} />
                    </SelectBox>
                  </ViewPicker>
                  <IconButton $on aria-label="Sample view"><VialSmallIcon /></IconButton>
                  <IconButton aria-label="Flow view"><FlowIcon /></IconButton>
                  <IconButton aria-label="Number view"><HashIcon /></IconButton>
                  <Divider $height={16} $after={-3} />
                  <IconButton aria-label="Select"><PointerIcon /></IconButton>
                </HeaderTools>
                <PanelWindowButtons />
              </PanelHeader>
              <ComponentTable />
              <Badge $right={44} $top={96}>4B</Badge>
            </Panel>

            <RowSplitter><Grip><Dots /></Grip></RowSplitter>

            <Split>
              <Panel>
                <PanelHeader>
                  <PanelTitle>Chromatograms</PanelTitle>
                  <ChartTools link />
                  <PanelWindowButtons />
                </PanelHeader>
                <Info>
                  <div>Item name: Green Tea 2x</div>
                  <div>Channel name: Caffeine [+H(2 ions)] : (19.2 PPM) 195.0877 196.0903</div>
                </Info>
                <Chromatogram />
                <Badge $right={124} $top={137}>4C</Badge>
              </Panel>

              <ColumnSplitter><Grip $vertical><Dots vertical /></Grip></ColumnSplitter>

              <Panel>
                <PanelHeader>
                  <PanelTitle $menu>Spectra<Caret color="#fff" w={6} h={4} /></PanelTitle>
                  <ChartTools />
                  <PanelWindowButtons />
                </PanelHeader>
                <SpectraBody>
                  <Spectrum>
                    <Info tone="cream">
                      <InfoLine>
                        <span>Item name: Green Tea 2x</span>
                        <span>Channel name: Low energy : Time 5.2452 +/- 0.0184 minutes : 3D mass peak list</span>
                      </InfoLine>
                      <div>Description:</div>
                    </Info>
                    <LowEnergy />
                  </Spectrum>
                  <Spectrum $blue>
                    <Info tone="blue">
                      <InfoLine>
                        <span>Item name: Green Tea 2x</span>
                        <span>Channel name: High energy : Time 5.2452 +/- 0.0184 minutes : 3D mass peak list</span>
                      </InfoLine>
                      <div>Description:</div>
                    </Info>
                    <HighEnergy />
                  </Spectrum>
                </SpectraBody>
                <Badge $right={44} $top={137}>4D</Badge>
              </Panel>
            </Split>
          </Workspace>
        </Main>
      </Body>
    </Page>
  );
}
